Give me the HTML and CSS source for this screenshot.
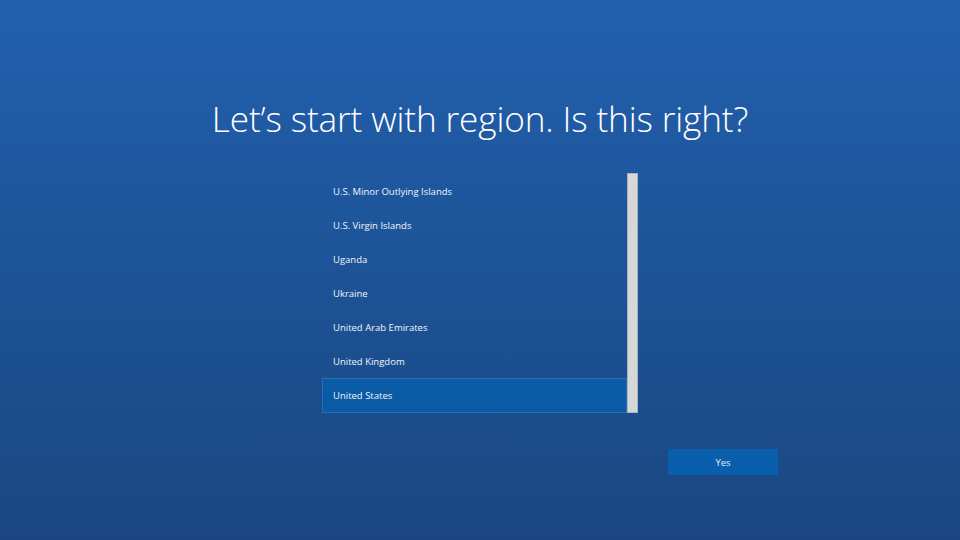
FILE: index.html
```html
<!DOCTYPE html>
<html lang="en">
<head>
<meta charset="utf-8">
<title>Region</title>
<link rel="stylesheet" href="styles.css">
</head>
<body>
<main class="oobe">
  <h1 class="title">Let’s start with region. Is this right?</h1>
  <div class="picker">
    <ul class="list">
      <li class="item">U.S. Minor Outlying Islands</li>
      <li class="item">U.S. Virgin Islands</li>
      <li class="item">Uganda</li>
      <li class="item">Ukraine</li>
      <li class="item">United Arab Emirates</li>
      <li class="item">United Kingdom</li>
      <li class="item selected">United States</li>
    </ul>
    <div class="scrollbar"></div>
  </div>
  <div class="actions">
    <button class="btn">Yes</button>
  </div>
</main>
</body>
</html>
```

FILE: styles.css
```css
html, body {
  margin: 0;
  padding: 0;
  height: 100%;
}
body {
  background: linear-gradient(to bottom, #2260ae 0%, #1d5397 50%, #1a4781 100%);
  font-family: "Open Sans", "Noto Sans", sans-serif;
  color: #ffffff;
  overflow: hidden;
}
.oobe {
  display: flex;
  flex-direction: column;
  align-items: center;
  height: 540px;
}
.title {
  margin: 96px 0 0 0;
  font-weight: 300;
  font-size: 35.2px;
  line-height: 44px;
  letter-spacing: -0.15px;
}
.picker {
  display: flex;
  width: 316px;
  height: 240px;
  margin-top: 33px;
}
.list {
  list-style: none;
  margin: 0;
  padding: 0;
  flex: 1;
  display: flex;
  flex-direction: column;
}
.item {
  flex: 1;
  box-sizing: border-box;
  display: flex;
  align-items: center;
  padding-left: 11px;
  padding-top: 2px;
  font-size: 9.5px;
  color: #f2f5fa;
}
.item.selected {
  background: #0a5aa5;
  border: 1px solid #2c6cb6;
  padding-left: 10px;
  padding-top: 1px;
}
.scrollbar {
  width: 11px;
  box-sizing: border-box;
  background: #d7d7d7;
  border: 1px solid #a9b3c0;
}
.actions {
  width: 596px;
  display: flex;
  justify-content: flex-end;
  margin-top: 36px;
}
.btn {
  width: 110px;
  height: 26px;
  border: none;
  background: #0a5fad;
  color: #e8eef7;
  font-family: "Open Sans", "Noto Sans", sans-serif;
  font-size: 9.5px;
  padding: 0;
}
```
